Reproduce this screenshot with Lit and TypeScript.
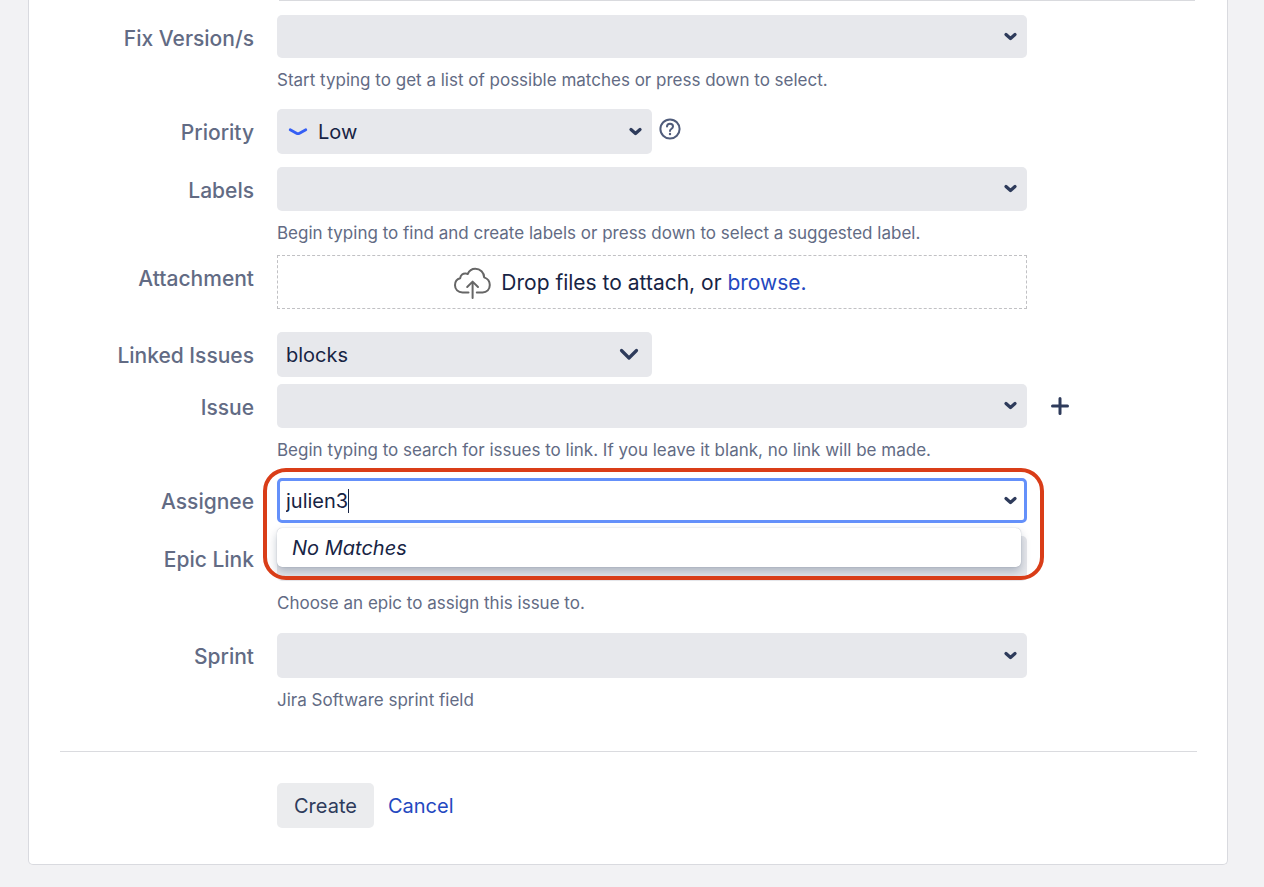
import { LitElement, html, css, svg, nothing } from "lit";
import { customElement } from "lit/decorators.js";

const chevron = html`<svg class="chevron" viewBox="0 0 14 10" aria-hidden="true">
  ${svg`<path d="M2 2.500 6.500 6.500 11 2.500" />`}
</svg>`;

@customElement("app-root")
export class AppRoot extends LitElement {
  static styles = css`
    :host {
      display: block;
      box-sizing: border-box;
      min-height: 100vh;
      padding: 0 36px 22px 28px;
      background: #f2f2f4;
      color: #172444;
      font-family: Inter, "Liberation Sans", sans-serif;
      font-size: 20px;
      line-height: 24px;
    }
    * {
      box-sizing: border-box;
    }
    .card {
      background: #fff;
      border: 1px solid #d9dadf;
      border-top: 0;
      border-radius: 0 0 5px 5px;
      padding: 0 30px 36px 31px;
    }
    .editor-end {
      height: 1px;
      margin: 0 2px 0 219px;
      background: #d9dade;
    }
    .row {
      display: grid;
      grid-template-columns: 194px minmax(0, 1fr);
      column-gap: 23px;
      align-items: start;
    }
    .g4 { margin-top: 4px; }
    .g10 { margin-top: 10px; }
    .g14 { margin-top: 14px; }
    .g16 { margin-top: 16px; }
    .g17 { margin-top: 17px; }
    .g18 { margin-top: 18px; }
    .g23 { margin-top: 23px; }
    .label {
      text-align: right;
      font-size: 21px;
      line-height: 48px;
      font-weight: 500;
      color: #626b84;
    }
    .line {
      display: flex;
      align-items: center;
    }
    .row > .line {
      align-self: start;
    }
    .field {
      position: relative;
      display: flex;
      align-items: center;
      width: 100%;
      max-width: 750px;
      height: 44px;
      padding: 0 9px;
      border-radius: 5px;
      background: #e7e8ec;
    }
    .compact {
      height: 43px;
    }
    .tall {
      height: 45px;
    }
    .short {
      max-width: 375px;
    }
    input,
    select,
    button {
      font: inherit;
      color: inherit;
      border: 0;
      margin: 0;
      padding: 0;
      background: none;
      outline: 0;
    }
    .field input {
      flex: 1;
      min-width: 0;
      height: 100%;
    }
    .field select {
      flex: 1;
      height: 100%;
      min-width: 0;
      appearance: none;
    }
    .chevron {
      flex: none;
      width: 14px;
      height: 10px;
      fill: none;
      stroke: #2e3b5b;
      stroke-width: 3.2;
      stroke-linecap: round;
      stroke-linejoin: round;
    }
    .chevron.large {
      width: 20px;
      height: 14px;
      margin-right: 4px;
    }
    .low {
      flex: none;
      width: 20px;
      height: 10px;
      margin: 0 10px 0 2px;
    }
    .help {
      margin: 10px 0 0;
      font-size: 17px;
      line-height: 24px;
      color: #626b84;
    }
    .icon-button {
      display: flex;
      cursor: pointer;
    }
    .question {
      width: 22px;
      height: 22px;
      margin: 0 0 5px 7px;
    }
    .plus {
      width: 20px;
      height: 20px;
      margin-left: 23px;
    }
    .drop {
      display: flex;
      align-items: center;
      justify-content: center;
      max-width: 750px;
      height: 54px;
      padding: 2px 44px 0 0;
      border: 1px dashed #c1c1c4;
      font-size: 21px;
    }
    .cloud {
      width: 38px;
      height: 32px;
      margin-right: 10px;
    }
    .link {
      color: #2448c0;
      text-decoration: none;
      cursor: pointer;
    }
    .active {
      background: #fff;
      border: 3px solid #6490fa;
      padding: 0 6px;
    }
    .active input {
      flex: none;
      field-sizing: content;
      caret-color: transparent;
    }
    .caret {
      width: 1px;
      height: 24px;
      margin-right: auto;
      background: #172444;
    }
    .menu {
      position: absolute;
      z-index: 1;
      top: 47px;
      left: -3px;
      right: 3px;
      padding: 8px 15px 7px;
      border-radius: 5px;
      background: #fff;
      box-shadow: 0 0 1px rgba(9, 30, 66, 0.35), 0 5px 10px rgba(9, 30, 66, 0.25);
      font-style: italic;
    }
    .marker {
      position: absolute;
      z-index: 2;
      top: -13px;
      left: -17px;
      right: -20px;
      height: 112px;
      border: 4px solid #d93d18;
      border-radius: 23px;
      pointer-events: none;
    }
    .rule {
      height: 1px;
      margin: 39px 0 31px;
      border: 0;
      background: #dadbdf;
    }
    .actions {
      display: flex;
      align-items: center;
      gap: 14px;
    }
    .create {
      height: 45px;
      padding: 0 17px;
      border-radius: 5px;
      background: #ebecee;
      color: #2e3b5b;
      cursor: pointer;
    }
  `;

  private combo(id: string, label: string, help: string, gap: string, size = "", extra: unknown = nothing) {
    return html`<div class="row ${gap}">
      <label class="label" for=${id}>${label}</label>
      <div>
        <div class="line">
          <div class="field ${size}">
            <input id=${id} type="text" role="combobox" aria-expanded="false" autocomplete="off" />${chevron}
          </div>
          ${extra}
        </div>
        <p class="help">${help}</p>
      </div>
    </div>`;
  }

  render() {
    return html`<form class="card" @submit=${(e: Event) => e.preventDefault()}>
      <div class="editor-end"></div>
      ${this.combo("fix", "Fix Version/s", "Start typing to get a list of possible matches or press down to select.", "g14", "compact")}
      <div class="row g17">
        <label class="label" for="priority">Priority</label>
        <div class="line">
          <div class="field short tall">
            <svg class="low" viewBox="0 0 20 10" aria-hidden="true">
              <path d="M2.200 2.800 8.900 6.400Q10 7 11.100 6.400L17.800 2.800" fill="none" stroke="#355ff5" stroke-width="2.8" stroke-linecap="round" stroke-linejoin="round" />
            </svg>
            <select id="priority"><option>Low</option></select>${chevron}
          </div>
          <button class="icon-button" type="button" aria-label="Priority help">
            <svg class="question" viewBox="0 0 22 22" fill="none" stroke="#505c7b" stroke-width="2" stroke-linecap="round">
              <circle cx="11" cy="11" r="9.6" />
              <path d="M8 8.6C8 6.8 9.2 5.8 11 5.8s3 1.1 3 2.7c0 1.3-.8 1.9-1.7 2.5-.9.6-1.3 1-1.3 2" />
              <circle cx="11" cy="16" r="1.2" fill="#505c7b" stroke="none" />
            </svg>
          </button>
        </div>
      </div>
      ${this.combo("labels", "Labels", "Begin typing to find and create labels or press down to select a suggested label.", "g10")}
      <div class="row g10">
        <span class="label">Attachment</span>
        <div class="drop">
          <svg class="cloud" viewBox="0 0 38 32" fill="none" stroke="#666" stroke-width="2" stroke-linecap="round" stroke-linejoin="round" aria-hidden="true">
            <path d="M15.5 25.5H9.5C5 25.5 2 22.3 2 18.2c0-3.600 2-6.200 5.200-7 .2-3 2.800-5.200 6-4.600l1.500.4C16.200 3.700 19 1.800 22.300 1.800c5 0 8.700 3.700 8.900 8.600 3.300 1.200 5.600 4.200 5.600 7.700 0 4.300-3 7.400-7.200 7.400h-5.800" />
            <path d="M19.600 31V14.800M14.200 20l5.400-5.400 5.400 5.400" />
          </svg>
          <span>Drop files to attach, or <a class="link" href="#browse">browse.</a></span>
        </div>
      </div>
      <div class="row g23">
        <label class="label" for="linked">Linked Issues</label>
        <div class="field short tall">
          <select id="linked"><option>blocks</option></select>
          <svg class="chevron large" viewBox="0 0 20 14" aria-hidden="true"><path d="M2.500 2.500 10 10 17.500 2.500" /></svg>
        </div>
      </div>
      ${this.combo(
        "issue",
        "Issue",
        "Begin typing to search for issues to link. If you leave it blank, no link will be made.",
        "g4",
        "",
        html`<button class="icon-button" type="button" aria-label="Add linked issue">
          <svg class="plus" viewBox="0 0 20 20" fill="none" stroke="#2e3b5b" stroke-width="3" stroke-linecap="round">
            <path d="M10 2.500v15M2.500 10h15" />
          </svg>
        </button>`
      )}
      <div class="row g16">
        <label class="label" for="assignee">Assignee</label>
        <div class="field active tall">
          <input id="assignee" type="text" role="combobox" aria-expanded="true" aria-controls="matches" autocomplete="off" value="julien3" />
          <span class="caret"></span>
          ${chevron}
          <div class="menu" id="matches">No Matches</div>
          <div class="marker"></div>
        </div>
      </div>
      ${this.combo("epic", "Epic Link", "Choose an epic to assign this issue to.", "g10", "tall")}
      ${this.combo("sprint", "Sprint", "Jira Software sprint field", "g18", "tall")}
      <hr class="rule" />
      <div class="row">
        <span></span>
        <div class="actions">
          <button class="create" type="submit">Create</button>
          <a class="link" href="#cancel">Cancel</a>
        </div>
      </div>
    </form>`;
  }
}
